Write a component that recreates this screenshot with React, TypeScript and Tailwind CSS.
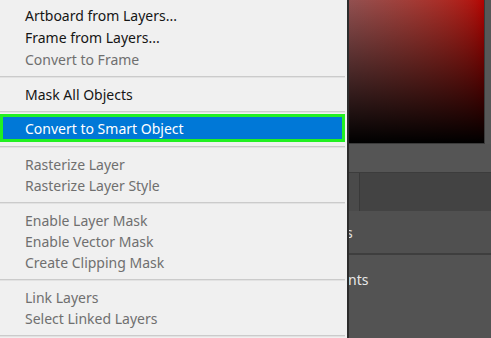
import React from "react"

type Item = { label: string; disabled?: boolean }

function Sep({ top = 6, bottom = 6 }: { top?: number; bottom?: number }) {
  const pt = top === 4 ? "pt-[4px]" : "pt-[6px]"
  const pb = bottom === 1 ? "pb-[1px]" : "pb-[6px]"
  return (
    <div className={`${pt} ${pb} pr-[2px]`}>
      <div className="h-[2px] bg-[#cbcbcb] border-b border-[#e2e2e2]" />
    </div>
  )
}

function Row({ item, tall }: { item: Item; tall?: boolean }) {
  return (
    <div
      className={`${tall ? "h-[22px]" : "h-[21px]"} flex items-center pl-[25px] whitespace-nowrap ${
        item.disabled ? "text-[#6f6f6f]" : "text-[#151515]"
      }`}
    >
      {item.label}
    </div>
  )
}

export default function App() {
  return (
    <div className="w-[491px] h-[338px] overflow-hidden flex bg-[#535353] font-['Noto_Sans',sans-serif] text-[14px]">
      {/* Context menu */}
      <div className="w-[347px] shrink-0 bg-[#f0f0f0] pt-[4px]">
        <Row tall item={{ label: "Artboard from Layers..." }} />
        <Row tall item={{ label: "Frame from Layers..." }} />
        <Row tall item={{ label: "Convert to Frame", disabled: true }} />
        <Sep />
        <Row item={{ label: "Mask All Objects" }} />
        <Sep bottom={1} />
        <div className="h-[28px] mr-[2px] border-[3px] border-[#22f022] bg-[#0078d7] flex items-center pl-[22px] text-white whitespace-nowrap">
          Convert to Smart Object
        </div>
        <Sep top={4} />
        <Row item={{ label: "Rasterize Layer", disabled: true }} />
        <Row item={{ label: "Rasterize Layer Style", disabled: true }} />
        <Sep />
        <Row item={{ label: "Enable Layer Mask", disabled: true }} />
        <Row item={{ label: "Enable Vector Mask", disabled: true }} />
        <Row item={{ label: "Create Clipping Mask", disabled: true }} />
        <Sep />
        <Row item={{ label: "Link Layers", disabled: true }} />
        <Row item={{ label: "Select Linked Layers", disabled: true }} />
        <Sep />
      </div>

      {/* Background app panels */}
      <div className="flex-1 flex flex-col border-l-2 border-[#2c2c2c] overflow-hidden">
        <div className="flex h-[144px] shrink-0">
          <div className="w-[136px] h-full bg-linear-to-r from-[#925050] to-[#b40000]">
            <div className="w-full h-full bg-linear-to-b from-transparent to-black border-r border-b border-[#3a3a3a]" />
          </div>
          <div className="flex-1 bg-[#575757]" />
        </div>
        <div className="h-[28px] shrink-0 bg-[#555555]" />
        <div className="h-[39px] shrink-0 flex bg-[#434343] border-t border-[#3c3c3c]">
          <div className="w-[11px] bg-[#4a4a4a] border-r border-[#393939]" />
          <div className="flex-1" />
        </div>
        <div className="h-[44px] shrink-0 bg-[#505050] border-b-2 border-[#3e3e3e] flex items-center text-[#e4e4e4] whitespace-nowrap">
          <span className="-ml-[3px]">s</span>
        </div>
        <div className="flex-1 bg-[#535353] pt-[14px] text-[#e8e8e8] whitespace-nowrap">
          <span className="-ml-[1px]">nts</span>
        </div>
      </div>
    </div>
  )
}
